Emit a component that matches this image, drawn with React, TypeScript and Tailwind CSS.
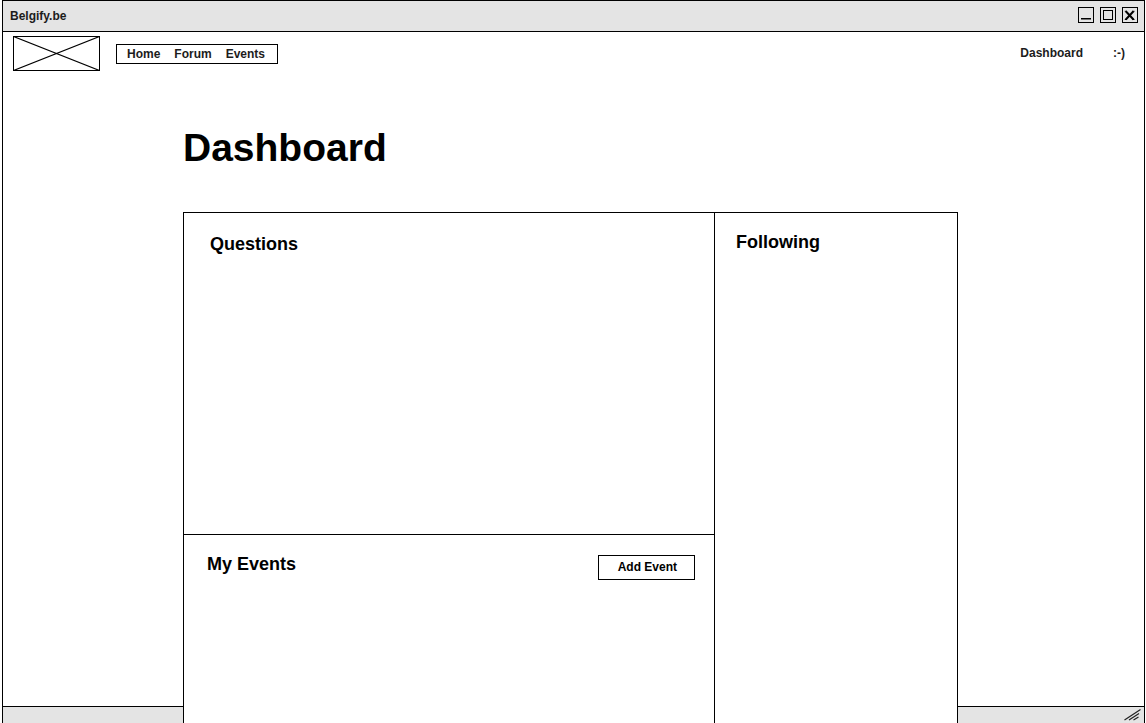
import React from "react";

const navItems = ["Home", "Forum", "Events"];

function WindowControls() {
  return (
    <div className="flex gap-1.5 self-start pt-1.5 text-black">
      <button type="button" aria-label="Minimize" className="block">
        <svg width="16" height="16" viewBox="0 0 16 16" fill="none" stroke="currentColor">
          <rect x="0.5" y="0.5" width="15" height="15" />
          <path d="M3 11.75h10" strokeWidth="1.5" />
        </svg>
      </button>
      <button type="button" aria-label="Maximize" className="block">
        <svg width="16" height="16" viewBox="0 0 16 16" fill="none" stroke="currentColor">
          <rect x="0.5" y="0.5" width="15" height="15" />
          <rect x="3.5" y="3.5" width="9" height="9" />
        </svg>
      </button>
      <button type="button" aria-label="Close" className="block">
        <svg width="16" height="16" viewBox="0 0 16 16" fill="none" stroke="currentColor">
          <rect x="0.5" y="0.5" width="15" height="15" />
          <path d="M3.8 4.2l7.7 8.3M11.5 4.2L3.8 12.5" strokeWidth="2" />
          <path d="M2.8 4.3H5M10.3 4.3h2.2M2.8 12.5H5M10.3 12.5h2.2" />
        </svg>
      </button>
    </div>
  );
}

function TitleBar() {
  return (
    <header className="flex h-[31px] items-center justify-between border-b border-black bg-[#e4e4e4] pr-1.5 pl-[7px]">
      <span>Belgify.be</span>
      <WindowControls />
    </header>
  );
}

function Logo() {
  return (
    <a href="#" aria-label="Belgify" className="block">
      <svg width="87" height="35" viewBox="0 0 87 35" fill="none" stroke="black">
        <rect x="0.5" y="0.5" width="86" height="34" />
        <path d="M0.5 0.5l86 34M86.5 0.5l-86 34" strokeWidth="1.2" />
      </svg>
    </a>
  );
}

function TopNav() {
  return (
    <div className="flex items-center justify-between pt-1 pr-[19px] pl-2.5">
      <div className="flex items-center gap-4">
        <Logo />
        <nav className="flex h-5 items-center gap-3.5 border border-black pr-3 pl-2.5">
          {navItems.map((item) => (
            <a key={item} href="#">
              {item}
            </a>
          ))}
        </nav>
      </div>
      <div className="flex items-center gap-[30px] pb-0.5">
        <a href="#">Dashboard</a>
        <a href="#">:-)</a>
      </div>
    </div>
  );
}

function Board() {
  return (
    <div className="flex grow border border-b-0 border-black bg-white">
      <div className="flex grow flex-col">
        <section className="h-[322px] border-b border-black px-[26px] pt-[19px]">
          <h2 className="text-lg/6">Questions</h2>
        </section>
        <section className="flex items-start justify-between pt-[17px] pr-[19px] pl-[23px]">
          <h2 className="text-lg/6">My Events</h2>
          <button type="button" className="mt-[3px] h-[25px] border border-black pr-[17px] pb-0.5 pl-[19px]">
            Add Event
          </button>
        </section>
      </div>
      <section className="w-[243px] border-l border-black px-[21px] pt-[17px]">
        <h2 className="text-lg/6">Following</h2>
      </section>
    </div>
  );
}

function StatusBar() {
  return (
    <footer className="col-start-1 row-start-2 flex h-[17px] items-start justify-end border-t border-black bg-[#e4e4e4] pt-0.5 pr-[3px]">
      <svg width="17" height="12" viewBox="0 0 17 12" fill="none" stroke="#222" strokeWidth="1.2" aria-hidden="true">
        <path d="M0.5 11L16.5 0.5M5 11L15 4.5M9.5 11L14.5 8" />
      </svg>
    </footer>
  );
}

export default function App() {
  return (
    <div className="min-h-screen bg-white pr-px pl-0.5 font-['Liberation_Sans',Arial,sans-serif] text-xs font-bold text-[#1c1c1c]">
      <div className="flex min-h-screen flex-col border border-b-0 border-black">
        <TitleBar />
        <TopNav />
        <div className="grid grow grid-cols-1 grid-rows-[1fr_auto]">
          <StatusBar />
          <main className="z-10 col-start-1 row-span-2 row-start-1 mr-[186px] ml-[180px] flex flex-col pt-[53px] text-black">
            <h1 className="mb-10 text-[39px]/[48px]">Dashboard</h1>
            <Board />
          </main>
        </div>
      </div>
    </div>
  );
}
